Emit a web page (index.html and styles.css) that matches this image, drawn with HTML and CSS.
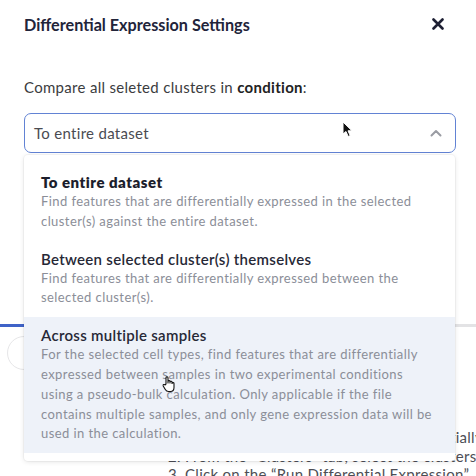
FILE: index.html
```html
<!DOCTYPE html>
<html lang="en">
<head>
<meta charset="utf-8">
<title>Differential Expression Settings</title>
<link rel="stylesheet" href="styles.css">
</head>
<body>
<div class="screen">
  <section class="modal">
    <header class="modal-header">
      <h2 class="modal-title">Differential Expression Settings</h2>
      <button class="close-btn" aria-label="Close">
        <svg width="12" height="12" viewBox="0 0 12 12"><path d="M1.5 1.5 L10.5 10.5 M10.5 1.5 L1.5 10.5" stroke="#1d1f33" stroke-width="2.6" stroke-linecap="round"/></svg>
      </button>
    </header>
    <p class="field-label">Compare all seleted clusters in <b>condition</b>:</p>
    <div class="select-wrap">
      <div class="select">
        <span class="select-value">To entire dataset</span>
        <svg class="chevron" width="12" height="8" viewBox="0 0 12 8"><path d="M1.5 6.5 L6 2 L10.5 6.5" fill="none" stroke="#9a9ca3" stroke-width="2" stroke-linecap="round" stroke-linejoin="round"/></svg>
      </div>
      <ul class="menu">
        <li class="menu-item selected">
          <div class="item-title">To entire dataset</div>
          <div class="item-desc">Find features that are differentially expressed in the selected<br>cluster(s) against the entire dataset.</div>
        </li>
        <li class="menu-item">
          <div class="item-title">Between selected cluster(s) themselves</div>
          <div class="item-desc">Find features that are differentially expressed between the<br>selected cluster(s).</div>
        </li>
        <li class="menu-item hovered">
          <div class="item-title">Across multiple samples</div>
          <div class="item-desc">For the selected cell types, find features that are differentially<br>expressed between samples in two experimental conditions<br>using a pseudo-bulk calculation. Only applicable if the file<br>contains multiple samples, and only gene expression data will be<br>used in the calculation.</div>
        </li>
      </ul>
      <svg class="cursor-arrow" width="12" height="17" viewBox="0 0 12 17"><path d="M1 1 L1 13 L4 10.5 L6.2 15.5 L8.2 14.6 L6 9.8 L10 9.8 Z" fill="#111" stroke="#fff" stroke-width="1"/></svg>
      <svg class="cursor-hand" width="14" height="17" viewBox="0 0 14 17"><path d="M4 8 L4 2 Q4 0.8 5 0.8 Q6 0.8 6 2 L6 7 L6 5.5 Q6 4.6 7 4.6 Q8 4.6 8 5.5 L8 7 L8 6 Q8 5.2 9 5.2 Q10 5.2 10 6 L10 7.5 Q10 6.6 11 6.6 Q12 6.6 12 7.5 L12 11.5 Q12 15.5 8.5 15.5 L6.5 15.5 Q4.5 15.5 3.3 13.5 L1.2 10 Q0.8 9 1.6 8.6 Q2.4 8.2 3 9 Z" fill="#fff" stroke="#111" stroke-width="1.1" stroke-linejoin="round"/></svg>
    </div>
  </section>
  <div class="tabbar"><span class="tab-active"></span></div>
  <section class="page">
    <span class="round-btn"></span>
    <ol class="steps">
      <li class="step step-one">Select cells to compare differentially</li>
      <li class="step">2. From the “Clusters” tab, select the clusters</li>
      <li class="step">3. Click on the “Run Differential Expression”</li>
    </ol>
  </section>
</div>
</body>
</html>
```
FILE: styles.css
```css
* { box-sizing: border-box; }
html, body { margin: 0; padding: 0; background: #fff; }
body { font-family: Lato, "Noto Sans", sans-serif; color: #333; }

.screen {
  position: relative;
  width: 476px;
  height: 476px;
  overflow: hidden;
  background: #fff;
}

.modal {
  height: 324px;
  padding: 0 26px 0 24px;
  background: #fff;
}

.modal-header {
  height: 48px;
  display: flex;
  align-items: center;
  justify-content: space-between;
}
.modal-title {
  margin: 0;
  font-size: 16.2px;
  font-weight: 700;
  color: #22243a;
  letter-spacing: 0;
}
.close-btn {
  border: 0;
  background: none;
  padding: 0;
  width: 24px;
  height: 24px;
  display: flex;
  align-items: center;
  justify-content: center;
}

.field-label {
  margin: 29px 0 0;
  font-size: 15px;
  letter-spacing: 0.3px;
  line-height: 20px;
  color: #3b3c40;
}
.field-label b { color: #222; font-weight: 700; }

.select-wrap {
  position: relative;
  margin-top: 16px;
  width: 432px;
}
.select {
  height: 40px;
  border: 1.5px solid #6283d4;
  border-radius: 7px;
  padding: 0 13px 0 9px;
  display: flex;
  align-items: center;
  justify-content: space-between;
  background: #fff;
}
.select-value {
  font-size: 15px;
  letter-spacing: 0.3px;
  color: #4a4b52;
}

.menu {
  position: absolute;
  top: 42px;
  left: 0;
  width: 431px;
  margin: 0;
  padding: 9px 0 8px;
  list-style: none;
  background: #fff;
  border-radius: 4px;
  box-shadow: 0 1px 5px rgba(0,0,0,0.10), 0 0 0 1px rgba(0,0,0,0.03);
  z-index: 2;
}
.menu-item {
  padding: 8px 17px 9px;
}
.menu-item.hovered { background: #eef2f9; }
.item-title {
  font-size: 15px;
  letter-spacing: 0.3px;
  line-height: 20px;
  font-weight: 600;
  color: #262836;
}
.menu-item.selected .item-title { font-weight: 800; letter-spacing: 0.5px; color: #1c1e2c; }
.item-desc {
  font-size: 13px;
  letter-spacing: 0.42px;
  line-height: 19.8px;
  color: #8b8e98;
  white-space: nowrap;
}

.cursor-arrow {
  position: absolute;
  left: 318px;
  top: 8px;
  z-index: 3;
}
.cursor-hand {
  position: absolute;
  left: 138px;
  top: 263px;
  z-index: 3;
}

.tabbar {
  height: 3px;
  background: #e3e3e5;
  display: flex;
}
.tab-active {
  width: 60px;
  height: 3px;
  background: #3f63c8;
}

.page {
  position: relative;
  height: 149px;
}
.round-btn {
  position: absolute;
  left: 7px;
  top: 9px;
  width: 34px;
  height: 34px;
  border-radius: 50%;
  border: 1px solid #e6e6e8;
}
.steps {
  list-style: none;
  margin: 0;
  padding: 101px 0 0 168px;
}
.step {
  font-size: 15px;
  letter-spacing: 0.3px;
  line-height: 18.5px;
  color: #4d4e55;
  white-space: nowrap;
}
.step-one {
  text-align: right;
  margin-right: -7px;
}
```
